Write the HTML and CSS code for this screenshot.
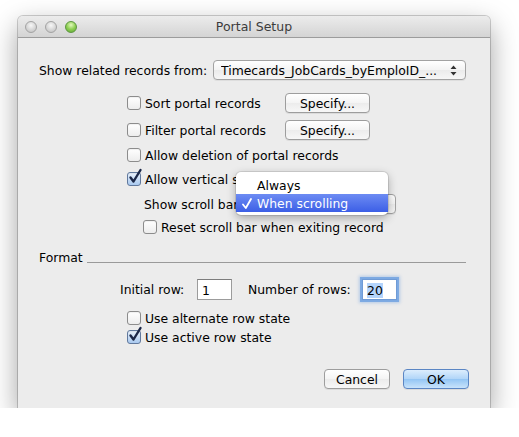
FILE: index.html
```html
<!DOCTYPE html>
<html>
<head>
<meta charset="utf-8">
<title>Portal Setup</title>
<link rel="stylesheet" href="styles.css">
</head>
<body>
<div class="stage">
  <div class="window">
    <div class="titlebar">
      <div class="lights">
        <span class="light"></span>
        <span class="light"></span>
        <span class="light green"></span>
      </div>
      <div class="title">Portal Setup</div>
      <div></div>
    </div>
    <div class="content">
      <div class="row r-source">
        <span class="label">Show related records from:</span>
        <div class="popup wide">
          <span class="popup-text">Timecards_JobCards_byEmploID_...</span>
          <svg class="arrows" width="7" height="11" viewBox="0 0 7 11"><path d="M3.5 0.5 L6.5 4 L0.5 4 Z M3.5 10.5 L6.5 7 L0.5 7 Z" fill="#333"/></svg>
        </div>
      </div>

      <div class="group">
        <div class="row r-sort">
          <label class="check"><span class="cb"></span><span>Sort portal records</span></label>
          <button class="btn specify">Specify...</button>
        </div>
        <div class="row r-filter">
          <label class="check"><span class="cb"></span><span>Filter portal records</span></label>
          <button class="btn specify">Specify...</button>
        </div>
        <div class="row r-del">
          <label class="check"><span class="cb"></span><span>Allow deletion of portal records</span></label>
        </div>
        <div class="row r-vert">
          <label class="check"><span class="cb on"><svg width="14" height="16" viewBox="0 0 14 16"><path d="M2.5 8.5 L5.5 12.5 L12.5 1" fill="none" stroke="#1b2748" stroke-width="2.4" stroke-linecap="round" stroke-linejoin="round"/></svg></span><span>Allow vertical scrolling</span></label>
        </div>
        <div class="row r-scroll">
          <span class="label">Show scroll bar:</span>
          <div class="popup small">
            <span class="popup-text">When scrolling</span>
          </div>
        </div>
        <div class="row r-reset">
          <label class="check"><span class="cb"></span><span>Reset scroll bar when exiting record</span></label>
        </div>
      </div>

      <div class="row r-format">
        <span class="label">Format</span>
        <span class="sep"></span>
      </div>

      <div class="row r-initial">
        <span class="label l-initial">Initial row:</span>
        <span class="field">1</span>
        <span class="label l-number">Number of rows:</span>
        <span class="field focus"><span class="sel">20</span></span>
      </div>

      <div class="group">
        <div class="row r-alt">
          <label class="check"><span class="cb"></span><span>Use alternate row state</span></label>
        </div>
        <div class="row r-active">
          <label class="check"><span class="cb on"><svg width="14" height="16" viewBox="0 0 14 16"><path d="M2.5 8.5 L5.5 12.5 L12.5 1" fill="none" stroke="#1b2748" stroke-width="2.4" stroke-linecap="round" stroke-linejoin="round"/></svg></span><span>Use active row state</span></label>
        </div>
      </div>

      <div class="row r-buttons">
        <button class="btn action">Cancel</button>
        <button class="btn action default">OK</button>
      </div>
    </div>

    <div class="menu">
      <div class="item"><span class="mark"></span>Always</div>
      <div class="item selected"><span class="mark"><svg width="10" height="11" viewBox="0 0 10 11"><path d="M1 6.5 L3.8 10 L9 1" fill="none" stroke="#fff" stroke-width="1.8" stroke-linecap="round" stroke-linejoin="round"/></svg></span>When scrolling</div>
    </div>
  </div>
</div>
</body>
</html>
```

FILE: styles.css
```css
* { box-sizing: border-box; }
html, body { margin: 0; background: #ffffff; }
body {
  font-family: "DejaVu Sans", "Liberation Sans", sans-serif;
  font-size: 12.4px;
  color: #000;
}
.stage { padding: 16px 0 0 18px; }

.window {
  position: relative;
  width: 472px;
  height: 392px;
  background: #ececec;
  border-radius: 5px 5px 0 0;
  box-shadow: 0 10px 28px rgba(0,0,0,.38), 0 0 0 1px rgba(0,0,0,.18);
  display: flex;
  flex-direction: column;
}

.titlebar {
  height: 22px;
  flex: none;
  display: grid;
  grid-template-columns: 1fr auto 1fr;
  align-items: center;
  background: linear-gradient(#ececec, #d4d4d4);
  border-bottom: 1px solid #9c9c9c;
  border-radius: 5px 5px 0 0;
}
.lights { display: flex; gap: 8px; padding-left: 7px; }
.light {
  width: 12px; height: 12px; border-radius: 50%;
  background: radial-gradient(circle at 50% 35%, #f7f7f7 0%, #d6d6d6 55%, #bdbdbd 100%);
  border: 1px solid #a3a3a3;
}
.light.green {
  background: radial-gradient(circle at 50% 30%, #e3f9bd 0%, #8fd054 50%, #5fa634 100%);
  border-color: #5d9640;
}
.title { font-size: 12.5px; color: #3c3c3c; }

.content {
  flex: 1;
  display: flex;
  flex-direction: column;
  padding: 20px 24px 0 21px;
}

.row { display: flex; align-items: center; }
.label { white-space: nowrap; }

.r-source { height: 24px; }
.popup {
  height: 20px;
  border: 1px solid #a2a2a2;
  border-radius: 4px;
  background: linear-gradient(#ffffff, #f3f3f3 50%, #ebebeb 51%, #f6f6f6);
  box-shadow: 0 1px 0 rgba(0,0,0,.06);
  display: flex;
  align-items: center;
  overflow: hidden;
  white-space: nowrap;
}
.popup.wide { width: 253px; margin-left: auto; padding: 0 8px 0 7px; }
.popup-text { flex: 1; overflow: hidden; }
.arrows { flex: none; }

.group { margin-left: 88px; display: flex; flex-direction: column; }

.check { display: flex; align-items: center; white-space: nowrap; }
.cb {
  position: relative;
  width: 14px; height: 14px;
  flex: none;
  margin-right: 4px;
  border: 1px solid #8c8c8c;
  border-radius: 3px;
  background: linear-gradient(#ffffff, #ededed);
  box-shadow: inset 0 1px 1px rgba(0,0,0,.06);
}
.cb.on {
  background: linear-gradient(#e8f1fc, #a9c9ef);
  border-color: #61799d;
}
.cb svg { position: absolute; left: 0; top: -4px; overflow: visible; }

.btn {
  font-family: inherit;
  font-size: 12.4px;
  color: #000;
  height: 20px;
  padding: 0;
  border: 1px solid #9d9d9d;
  border-radius: 4px;
  background: linear-gradient(#ffffff, #f4f4f4 50%, #ececec 51%, #f7f7f7);
  box-shadow: 0 1px 0 rgba(0,0,0,.07);
}
.btn.default {
  background: linear-gradient(#dcedfd, #b0d5f8 50%, #93c5f4 51%, #c8e3fb);
  border-color: #5b86c4;
}

.r-sort { height: 24px; margin-top: 9px; }
.r-filter { height: 24px; margin-top: 3px; }
.r-sort .check, .r-filter .check { width: 158px; }
.specify { width: 85px; }

.r-del { height: 20px; margin-top: 3px; }
.r-vert { height: 20px; margin-top: 4px; }
.r-scroll {
  height: 22px; margin-top: 4px;
  padding-left: 17px;
  display: grid;
  grid-template-columns: 97px 155px;
  align-items: center;
}
.popup.small { padding-left: 8px; }
.r-reset { height: 20px; margin-top: 2px; padding-left: 16px; }

.r-format { height: 20px; margin-top: 10px; }
.sep { flex: 1; height: 1px; background: #9a9a9a; margin: 10px 0 0 4px; }

.r-initial { height: 22px; margin-top: 11px; padding-left: 81px; }
.l-initial { width: 77px; }
.l-number { width: 114px; margin-left: 16px; }
.field {
  width: 35px; height: 21px;
  background: #fff;
  border: 1px solid #9c9c9c;
  border-top-color: #7d7d7d;
  padding: 3px 0 0 4px;
  line-height: 15px;
}
.field.focus {
  border-color: #6f9bd6;
  box-shadow: 0 0 0 2px rgba(110,160,225,.8), 0 0 3px 3px rgba(110,160,225,.45);
}
.sel { background: #b4d4fc; }

.r-alt { height: 18px; margin-top: 9px; }
.r-active { height: 18px; margin-top: 1px; }

.r-buttons {
  height: 22px;
  margin-top: 22px;
  margin-right: -3px;
  justify-content: flex-end;
  gap: 13px;
}
.action { width: 66px; }

.menu {
  position: absolute;
  left: 218px;
  top: 156px;
  width: 152px;
  padding: 4px 0 3px;
  background: #ffffff;
  border-radius: 5px;
  box-shadow: 0 3px 10px rgba(0,0,0,.3), 0 0 0 1px rgba(0,0,0,.1);
}
.menu .item {
  height: 18px;
  display: flex;
  align-items: center;
  white-space: nowrap;
}
.menu .mark { width: 21px; padding-left: 6px; flex: none; display: flex; align-items: center; }
.menu .item.selected {
  color: #fff;
  background: linear-gradient(#6d8cf3, #3c5fe6);
}
```
